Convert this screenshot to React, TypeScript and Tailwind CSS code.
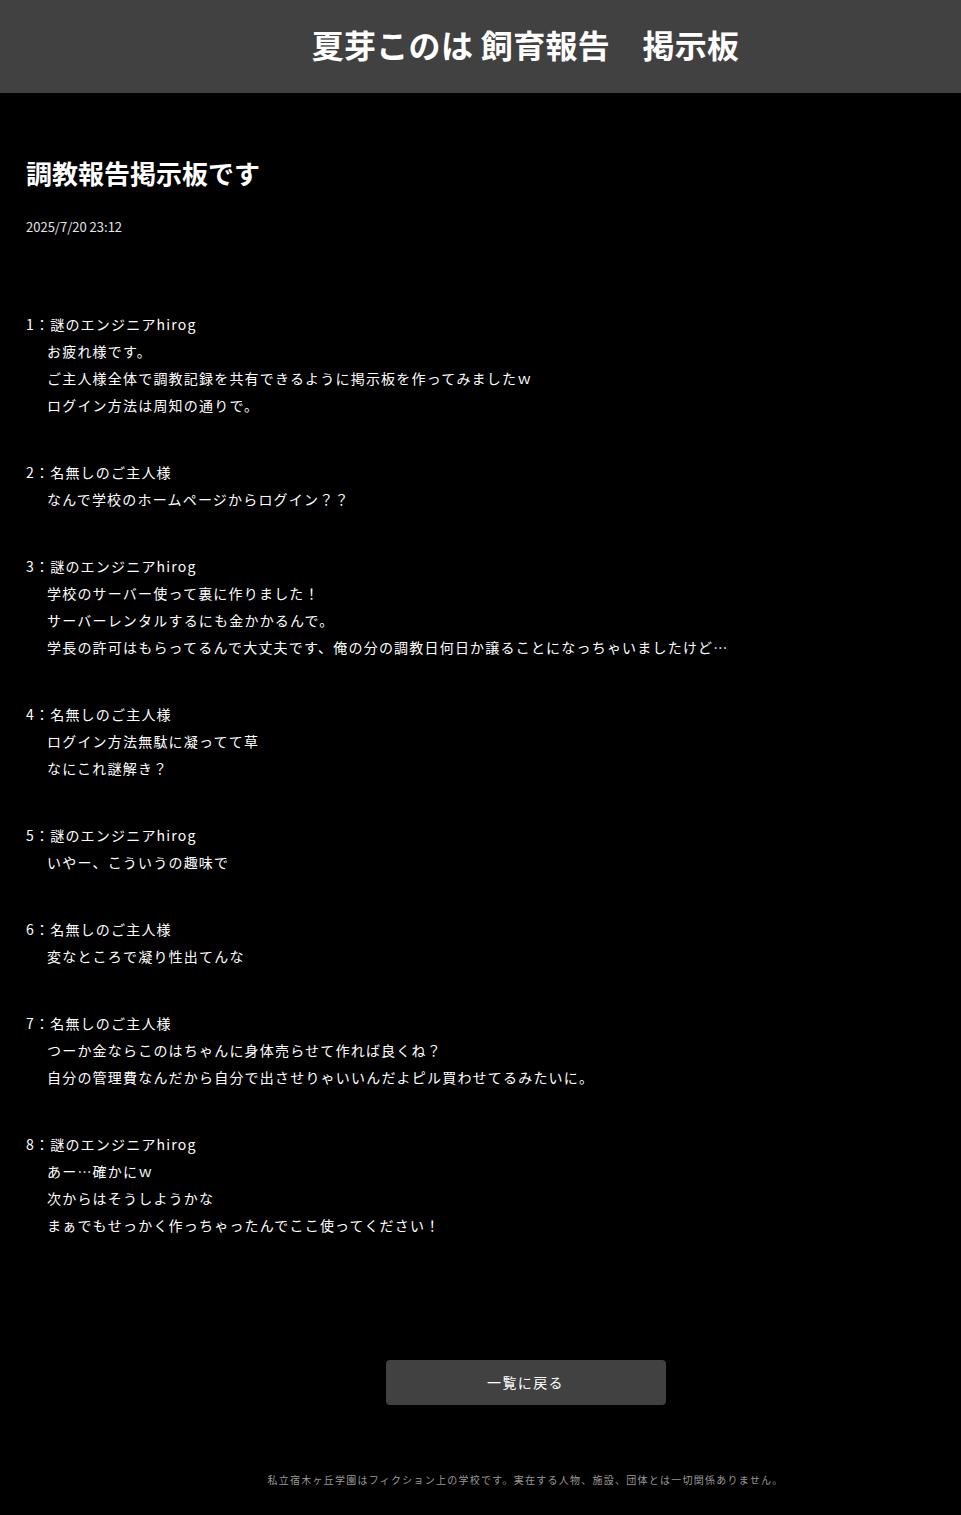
import React from "react";

const posts: { no: number; name: string; lines: string[] }[] = [
  { no: 1, name: "謎のエンジニアhirog", lines: ["お疲れ様です。", "ご主人様全体で調教記録を共有できるように掲示板を作ってみましたｗ", "ログイン方法は周知の通りで。"] },
  { no: 2, name: "名無しのご主人様", lines: ["なんで学校のホームページからログイン？？"] },
  { no: 3, name: "謎のエンジニアhirog", lines: ["学校のサーバー使って裏に作りました！", "サーバーレンタルするにも金かかるんで。", "学長の許可はもらってるんで大丈夫です、俺の分の調教日何日か譲ることになっちゃいましたけど…"] },
  { no: 4, name: "名無しのご主人様", lines: ["ログイン方法無駄に凝ってて草", "なにこれ謎解き？"] },
  { no: 5, name: "謎のエンジニアhirog", lines: ["いやー、こういうの趣味で"] },
  { no: 6, name: "名無しのご主人様", lines: ["変なところで凝り性出てんな"] },
  { no: 7, name: "名無しのご主人様", lines: ["つーか金ならこのはちゃんに身体売らせて作れば良くね？", "自分の管理費なんだから自分で出させりゃいいんだよピル買わせてるみたいに。"] },
  { no: 8, name: "謎のエンジニアhirog", lines: ["あー…確かにｗ", "次からはそうしようかな", "まぁでもせっかく作っちゃったんでここ使ってください！"] },
];

export default function App() {
  return (
    <div
      className="min-h-[1515px] bg-black text-white"
      style={{ fontFamily: '"Noto Sans CJK JP", "Noto Sans", sans-serif' }}
    >
      <header className="h-[93px] bg-[#414141] flex items-center justify-center pl-[90px] pb-[6px]">
        <h1 className="text-[32px] font-bold leading-none tracking-[0.01em]">夏芽このは 飼育報告　掲示板</h1>
      </header>
      <main className="px-[26px] pt-[62px]">
        <h2 className="text-[26px] font-bold leading-[36px]">調教報告掲示板です</h2>
        <div className="mt-[26px] text-[13px] leading-[20px] text-[#e5e5e5]">2025/7/20 23:12</div>
        <div className="mt-[74px] flex flex-col gap-[40px]">
          {posts.map((p) => (
            <div key={p.no} className="text-[14px] leading-[27px] tracking-[1.2px]">
              <div>
                {p.no}：{p.name}
              </div>
              <div className="pl-[21px]">
                {p.lines.map((l, i) => (
                  <div key={i}>{l}</div>
                ))}
              </div>
            </div>
          ))}
        </div>
      </main>
      <div className="mt-[121px] flex justify-center pl-[90px]">
        <button className="w-[280px] h-[45px] rounded-[4px] bg-[#414141] text-[14px] tracking-[0.1em] text-white">
          一覧に戻る
        </button>
      </div>
      <footer className="mt-[67px] pb-[28px] flex justify-center pl-[90px]">
        <p className="text-[10px] leading-[15px] tracking-[1.25px] text-[#9a9a9a]">
          私立宿木ヶ丘学園はフィクション上の学校です。実在する人物、施設、団体とは一切関係ありません。
        </p>
      </footer>
    </div>
  );
}
